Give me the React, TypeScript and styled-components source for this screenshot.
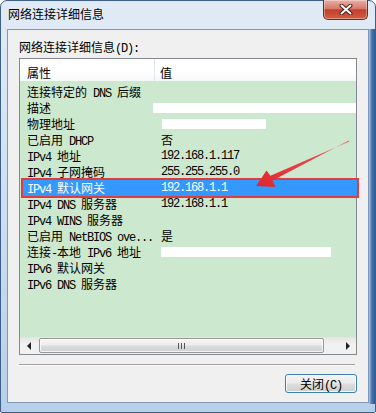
import React from "react";
import styled, { createGlobalStyle } from "styled-components";

const GlobalStyle = createGlobalStyle`
  html, body { margin: 0; padding: 0; background: #fff; }
  body {
    font-family: "Noto Sans CJK SC", "Liberation Sans", sans-serif;
    font-size: 12px;
    color: #000;
  }
  * { box-sizing: border-box; }
`;

const Frame = styled.div`
  position: relative;
  width: 376px;
  height: 413px;
  display: flex;
  flex-direction: column;
  padding: 0 6px 9px 6px;
  border: 1px solid #3d5f8a;
  border-radius: 7px 7px 2px 2px;
  background:
    linear-gradient(90deg, #a9c4e4 0%, #4a78b0 45%, #2c5a93 100%) right 0 top 28px / 6px calc(100% - 36px) no-repeat,
    linear-gradient(180deg, #e1ebf6 0%, #d4e3f2 35%, #b7cfe9 100%);
`;

const TitleBar = styled.div`
  height: 28px;
  display: flex;
  justify-content: space-between;
  align-items: flex-start;
`;

const TitleText = styled.div`
  padding-top: 5px;
  margin-left: 1px;
  line-height: 16px;
  font-size: 12px;
`;

const CloseBox = styled.div`
  width: 45px;
  height: 20px;
  margin-top: -1px;
  margin-right: 1px;
  display: flex;
  align-items: center;
  justify-content: center;
  border: 1px solid #6b2a22;
  border-top: none;
  border-radius: 0 0 5px 5px;
  background: linear-gradient(180deg, #e9afa4 0%, #d67a6b 45%, #c23f2d 52%, #d0603f 100%);
  box-shadow: inset 0 0 0 1px rgba(255, 255, 255, 0.35);
`;

const Client = styled.div`
  flex: 1;
  display: flex;
  flex-direction: column;
  background: #f0f0f0;
  border: 1px solid #8198b8;
  padding: 9px 11px 0;
`;

const Label = styled.div`
  line-height: 16px;
  margin-bottom: 1px;
`;

const ListView = styled.div`
  height: 297px;
  display: flex;
  flex-direction: column;
  border: 1px solid #828790;
  background: #cce8cf;
`;

const Header = styled.div`
  height: 22px;
  display: flex;
  background: linear-gradient(180deg, #ffffff 0%, #ffffff 60%, #f6f7f9 100%);
`;

const HeadCell = styled.div<{ $w?: number; $pad: number }>`
  ${(p) => (p.$w ? `width: ${p.$w}px; border-right: 1px solid #e3e5e8;` : "flex: 1;")}
  padding: 6px 0 0 ${(p) => p.$pad}px;
  line-height: 16px;
`;

const Body = styled.div`
  flex: 1;
  padding-top: 3px;
`;

const Row = styled.div<{ $sel?: boolean }>`
  display: flex;
  height: 16px;
  line-height: 16px;
  white-space: nowrap;
  ${(p) =>
    p.$sel
      ? `
    margin: 0 -1px 0 3px;
    background: #3399ff;
    color: #fff;
    outline: 2px solid #e23a40;
  `
      : ""}
`;

const KeyCell = styled.div<{ $sel?: boolean }>`
  width: ${(p) => (p.$sel ? 138 : 141)}px;
  height: 16px;
  overflow: hidden;
  padding-left: ${(p) => (p.$sel ? 4 : 7)}px;
`;

const ValCell = styled.div`
  flex: 1;
  height: 16px;
  display: flex;
  align-items: center;
`;

const Blank = styled.span<{ $w: number; $off: number }>`
  display: inline-block;
  width: ${(p) => p.$w}px;
  height: 10px;
  margin-left: ${(p) => p.$off}px;
  background: #fff;
`;

const Ascii = styled.span`
  font-family: "Liberation Mono", "Noto Sans CJK SC", monospace;
  font-size: 12px;
  letter-spacing: -1.2px;
`;

const ScrollBar = styled.div`
  height: 17px;
  display: flex;
  align-items: center;
  background: linear-gradient(180deg, #e4e4e4 0%, #f1f1f1 40%, #f1f1f1 100%);
`;

const ScrollArrow = styled.div<{ $dir: "left" | "right" }>`
  width: 17px;
  height: 17px;
  display: flex;
  align-items: center;
  justify-content: center;
  &::after {
    content: "";
    width: 0;
    height: 0;
    border-top: 4px solid transparent;
    border-bottom: 4px solid transparent;
    ${(p) =>
      p.$dir === "left"
        ? "border-right: 4px solid #222;"
        : "border-left: 4px solid #222;"}
  }
`;

const Thumb = styled.div`
  margin-left: 2px;
  width: 285px;
  height: 15px;
  display: flex;
  align-items: center;
  justify-content: center;
  border: 1px solid #979797;
  border-radius: 2px;
  background: linear-gradient(180deg, #f7f7f7 0%, #ececec 48%, #dcdcdc 52%, #d0d0d0 100%);
  box-shadow: inset 0 0 0 1px rgba(255, 255, 255, 0.7);
`;

const Grip = styled.div`
  width: 7px;
  height: 6px;
  background: repeating-linear-gradient(90deg, #555 0 1px, transparent 1px 3px);
`;

const Spacer = styled.div`
  flex: 1;
`;

const Separator = styled.div`
  margin: 9px 2px 0 0;
  height: 2px;
  border-top: 1px solid #a0a0a0;
  border-bottom: 1px solid #ffffff;
`;

const ButtonRow = styled.div`
  display: flex;
  justify-content: flex-end;
  margin-top: 8px;
`;

const DialogButton = styled.button`
  width: 72px;
  height: 19px;
  padding: 0;
  font-family: inherit;
  font-size: 12px;
  line-height: 17px;
  color: #000;
  border: 1px solid #3c7fb1;
  border-radius: 3px;
  background: linear-gradient(180deg, #f3f3f3 0%, #ebebeb 48%, #dddddd 52%, #cfcfcf 100%);
  box-shadow: inset 0 0 0 1px rgba(255, 255, 255, 0.8);
`;

const Overlay = styled.svg`
  position: absolute;
  top: -1px;
  left: -1px;
  pointer-events: none;
`;

// split text so latin runs use a narrow mono face like the bitmap font
const mix = (text: string) =>
  text.split(/([\x20-\x7e]+)/).map((part, i) =>
    /^[\x20-\x7e]+$/.test(part) ? <Ascii key={i}>{part}</Ascii> : part
  );

type Item = {
  k: string;
  v?: string;
  blank?: { w: number; off: number };
  sel?: boolean;
};

const items: Item[] = [
  { k: "连接特定的 DNS 后缀" },
  { k: "描述", blank: { w: 203, off: -3 } },
  { k: "物理地址", blank: { w: 104, off: 1 } },
  { k: "已启用 DHCP", v: "否" },
  { k: "IPv4 地址", v: "192.168.1.117" },
  { k: "IPv4 子网掩码", v: "255.255.255.0" },
  { k: "IPv4 默认网关", v: "192.168.1.1", sel: true },
  { k: "IPv4 DNS 服务器", v: "192.168.1.1" },
  { k: "IPv4 WINS 服务器" },
  { k: "已启用 NetBIOS ove...", v: "是" },
  { k: "连接-本地 IPv6 地址", blank: { w: 170, off: 0 } },
  { k: "IPv6 默认网关" },
  { k: "IPv6 DNS 服务器" },
];

const App = () => {
  return (
    <>
      <GlobalStyle />
      <Frame>
        <TitleBar>
          <TitleText>网络连接详细信息</TitleText>
          <CloseBox>
            <svg width="14" height="11" viewBox="0 0 14 11">
              <path d="M2.5 1.5 L11.5 9.5 M11.5 1.5 L2.5 9.5" stroke="#4a1a14" strokeWidth="4" strokeLinecap="round" />
              <path d="M2.5 1.5 L11.5 9.5 M11.5 1.5 L2.5 9.5" stroke="#fff" strokeWidth="2" strokeLinecap="round" />
            </svg>
          </CloseBox>
        </TitleBar>
        <Client>
          <Label>{mix("网络连接详细信息(D):")}</Label>
          <ListView>
            <Header>
              <HeadCell $w={135} $pad={7}>属性</HeadCell>
              <HeadCell $pad={5}>值</HeadCell>
            </Header>
            <Body>
              {items.map((it, i) => (
                <Row key={i} $sel={it.sel}>
                  <KeyCell $sel={it.sel}>{mix(it.k)}</KeyCell>
                  <ValCell>
                    {it.blank ? <Blank $w={it.blank.w} $off={it.blank.off} /> : it.v ? mix(it.v) : null}
                  </ValCell>
                </Row>
              ))}
            </Body>
            <ScrollBar>
              <ScrollArrow $dir="left" />
              <Thumb>
                <Grip />
              </Thumb>
              <Spacer />
              <ScrollArrow $dir="right" />
            </ScrollBar>
          </ListView>
          <Separator />
          <ButtonRow>
            <DialogButton>{mix("关闭(C)")}</DialogButton>
          </ButtonRow>
        </Client>
        <Overlay width="376" height="413" viewBox="0 0 376 413">
          <defs>
            <linearGradient id="arrowFill" x1="0" y1="1" x2="1" y2="0">
              <stop offset="0" stopColor="#e0262e" />
              <stop offset="1" stopColor="#f05a5a" />
            </linearGradient>
          </defs>
          <polygon
            points="256,186 266.5,170.5 270.5,175.8 349.2,141.4 348.8,140.6 272.6,180.4 275.5,187"
            fill="url(#arrowFill)"
          />
        </Overlay>
      </Frame>
    </>
  );
};

export default App;
